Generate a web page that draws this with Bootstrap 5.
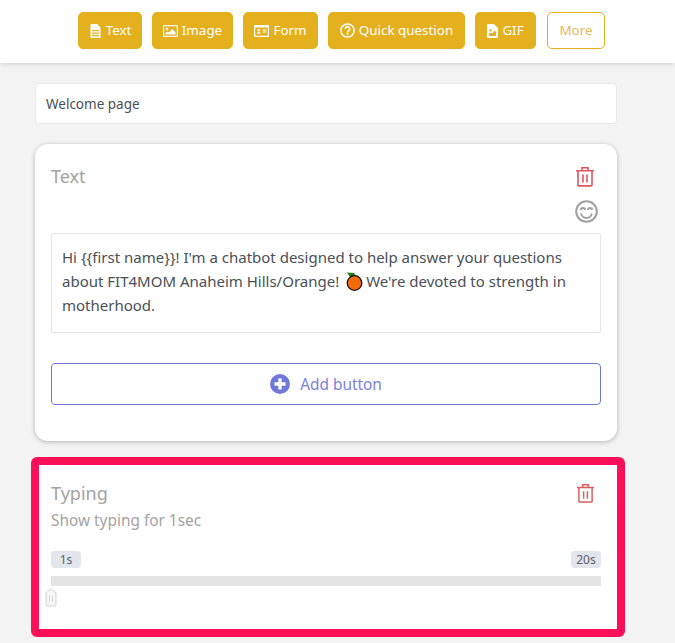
<!DOCTYPE html>
<html lang="en"><head><meta charset="utf-8"><title>Welcome page</title>
<link rel="stylesheet" href="https://cdn.jsdelivr.net/npm/bootstrap@5.3.0/dist/css/bootstrap.min.css">
<style>
html,body{height:100%}
body{background:#f3f3f3;font-family:"Noto Sans","Open Sans",sans-serif;color:#495057;font-size:15px;overflow:hidden}
.topbar{background:#fff;height:63px;padding:12px 0 0 78px;box-shadow:0 1px 5px rgba(0,0,0,.14);gap:10px}
.tool-btn{background:#e5b01d;border:1px solid #e5b01d;color:#fff;height:37px;border-radius:5px;font-size:13.4px;padding:0;gap:4px;line-height:1}
.tool-btn:hover{background:#e5b01d;color:#fff}
.btn-w64{width:64px}.btn-w81{width:81px}.btn-w75{width:75px}.btn-w137{width:137px}.btn-w61{width:61px}
.tool-more{background:#fff;color:#e8b75a;margin-left:1px;width:58px}
.wrap{width:582px;margin:20px 0 0 35px}
.page-name{height:41px;border:1px solid #e9e9e9;border-radius:4px;background:#fff;font-size:13.5px;padding:1px 10px 0;color:#495057;display:flex;align-items:center}
.block-one{margin-top:20px;height:297px;border:0;border-radius:13px;box-shadow:0 1px 5px rgba(0,0,0,.25);padding:20px 16px 16px;background:#fff}
.block-title{font-size:18px;color:#a3a3a3;line-height:25px}
.msg-box{height:100px;border:1px solid #e6e6e6;border-radius:2px;padding:11px 10px;line-height:24px;color:#495057;font-size:15px;margin-top:10px}
.add-btn{height:42px;border:1px solid #7177d8;border-radius:4px;color:#7b80dc;background:#fff;font-size:15.4px;margin-top:30px;padding-top:8px;gap:10px;width:100%}
.add-btn svg{margin-top:-2px}
.add-btn:hover{background:#fff;color:#7b80dc;border-color:#7177d8}
.block-two{margin:16px 0 0 -4px;width:594px;height:180px;border:8px solid #ff0f57;border-radius:6px;background:#fff;padding:16px 16px 0 12px;position:relative}
.sub-line{font-size:15.4px;color:#a3a3a3;line-height:22px;margin-top:4px}
.range-tag{background:#e3e5ec;color:#5c6068;border-radius:4px;font-size:12px;height:17px;width:30px;line-height:17px;text-align:center}
.tags{margin-top:19px}
.track{height:10px;background:#e4e4e4;margin-top:8px}
.grip{position:absolute;left:6px;top:123px;width:12px;height:19px}
.trash{display:block;margin:3px 7px 0 0}
.smile-row{margin:11px 3px 0 0}
.orange{vertical-align:-4px;margin:0 3px}
</style></head><body>
<div class="topbar d-flex align-items-start">
<button class="btn tool-btn btn-w64 d-flex align-items-center justify-content-center"><svg width="13" height="14" viewBox="0 0 13 14"><path fill="#fff" d="M2.500 0H8l3.500 3.500V13a1 1 0 0 1-1 1h-8a1 1 0 0 1-1-1V1a1 1 0 0 1 1-1zM3 6v1.200h7V6zm0 2.500v1.200h7V8.500zm0 2.500v1.200h7V11z"/></svg>Text</button>
<button class="btn tool-btn btn-w81 d-flex align-items-center justify-content-center"><svg width="15" height="12" viewBox="0 0 15 12"><path fill="#fff" fill-rule="evenodd" d="M1 0h13a1 1 0 0 1 1 1v10a1 1 0 0 1-1 1H1a1 1 0 0 1-1-1V1a1 1 0 0 1 1-1zm.2 1.300v9.400h12.600V1.300z"/><circle cx="4" cy="4" r="1.300" fill="#fff"/><path fill="#fff" d="M2.500 9.500V8l2-1.500 1.500 1 3-3.500 3.500 3v2.500z"/></svg>Image</button>
<button class="btn tool-btn btn-w75 d-flex align-items-center justify-content-center"><svg width="15" height="12" viewBox="0 0 15 12"><path fill="#fff" fill-rule="evenodd" d="M1 0h13a1 1 0 0 1 1 1v10a1 1 0 0 1-1 1H1a1 1 0 0 1-1-1V1a1 1 0 0 1 1-1zm.2 2.500v8.200h12.600V2.500zM3 8.800c0-1.200 1-1.800 1.800-1.800s1.800.6 1.800 1.800zM4.800 4a1.300 1.300 0 1 1 0 2.600 1.300 1.300 0 0 1 0-2.600zM8.500 4.500h4v1h-4zm0 2h4v1h-4z"/></svg>Form</button>
<button class="btn tool-btn btn-w137 d-flex align-items-center justify-content-center"><svg width="15" height="15" viewBox="0 0 15 15"><circle cx="7.500" cy="7.500" r="6.600" fill="none" stroke="#fff" stroke-width="1.500"/><path fill="none" stroke="#fff" stroke-width="1.600" d="M5.300 5.900a2.200 2.200 0 1 1 3.400 1.800c-.8.500-1.200.9-1.200 1.700"/><circle cx="7.500" cy="11" r="1" fill="#fff"/></svg>Quick question</button>
<button class="btn tool-btn btn-w61 d-flex align-items-center justify-content-center"><svg width="11" height="14" viewBox="0 0 11 14"><path fill="#fff" fill-rule="evenodd" d="M1 0h6l4 4v9a1 1 0 0 1-1 1H1a1 1 0 0 1-1-1V1a1 1 0 0 1 1-1zm1 9.500V12h7V8L7.500 6.500 5.500 9.500l-1-1zM3.500 5a1.200 1.200 0 1 0 0 2.400 1.200 1.200 0 0 0 0-2.400z"/></svg>GIF</button>
<button class="btn tool-btn tool-more">More</button>
</div>
<div class="wrap">
<div class="page-name">Welcome page</div>
<div class="block-one card">
<div class="d-flex justify-content-between align-items-start">
<div class="block-title">Text</div>
<svg class="trash" width="18" height="20" viewBox="0 0 18 20" fill="none" stroke="#e0565f" stroke-width="1.600"><path d="M0 4.200h18M6 4V1.200h6V4M2 4.200V18.800a.6.600 0 0 0 .6.600h12.800a.6.600 0 0 0 .6-.6V4.200M7 8v8M11 8v8" transform="translate(0 -.5)"/></svg>
</div>
<div class="d-flex justify-content-end smile-row"><svg width="23" height="23" viewBox="0 0 23 23" fill="none" stroke="#a0a0a0" stroke-width="2"><circle cx="11.500" cy="11.500" r="10.300"/><path d="M6 13.500c1 3.500 3.500 4.500 5.500 4.500s4.500-1 5.500-4.500" stroke-width="1.800"/><path d="M6 10a2 2 0 0 1 4 0M13 10a2 2 0 0 1 4 0" stroke-width="2"/></svg></div>
<div class="msg-box">Hi {{first name}}! I'm a chatbot designed to help answer your questions about FIT4MOM Anaheim Hills/Orange! <svg class="orange" width="17" height="19" viewBox="0 0 17 19"><path fill="#1e7a1e" d="M1 .5l7 .5 3 4.500-7-.5z"/><circle cx="8.500" cy="11" r="7.300" fill="#f26c0d" stroke="#111" stroke-width="1.300"/></svg>We're devoted to strength in motherhood.</div>
<button class="btn add-btn d-flex align-items-center justify-content-center"><svg width="20" height="20" viewBox="0 0 20 20"><circle cx="10" cy="10" r="10" fill="#7177d8"/><path stroke="#fff" stroke-width="3.400" d="M10 4.500v11M4.500 10h11"/></svg>Add button</button>
</div>
<div class="block-two">
<div class="d-flex justify-content-between align-items-start">
<div class="block-title">Typing</div>
<svg class="trash" width="17" height="19" viewBox="0 0 18 20" fill="none" stroke="#d9605f" stroke-width="1.600"><path d="M0 4.200h18M6 4V1.200h6V4M2 4.200V18.800a.6.600 0 0 0 .6.600h12.800a.6.600 0 0 0 .6-.6V4.200M7 8v8M11 8v8" transform="translate(0 -.5)"/></svg>
</div>
<div class="sub-line">Show typing for 1sec</div>
<div class="d-flex justify-content-between tags"><span class="range-tag">1s</span><span class="range-tag">20s</span></div>
<div class="track"></div>
<svg class="grip" viewBox="0 0 12 19"><path d="M1 5 6 .8 11 5v11.500a1.500 1.500 0 0 1-1.500 1.500h-7A1.500 1.500 0 0 1 1 16.500z" fill="#f6f6f6" stroke="#d3d3d3"/><path d="M4.500 7.500v6M7.500 7.500v6" stroke="#d3d3d3"/></svg>
</div>
</div>
<script src="https://cdn.jsdelivr.net/npm/bootstrap@5.3.0/dist/js/bootstrap.bundle.min.js"></script>
</body></html>
